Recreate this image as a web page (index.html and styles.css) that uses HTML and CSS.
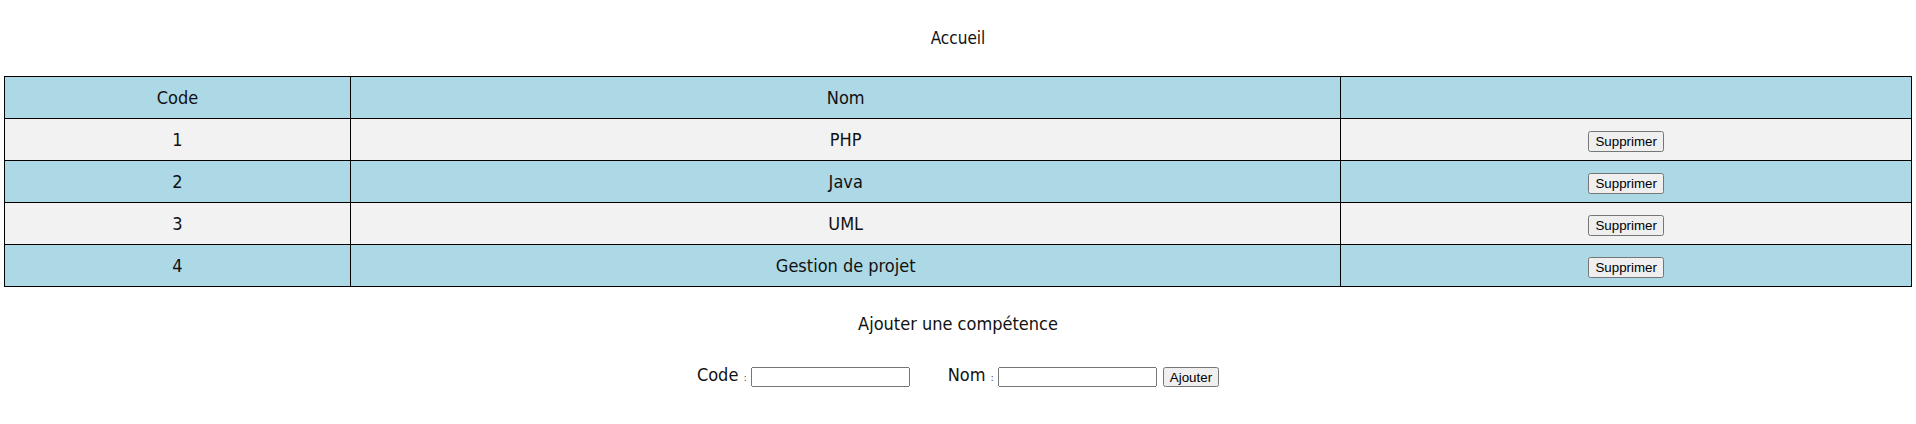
FILE: index.html
```html
<!DOCTYPE html>
<html lang="fr">
<head>
    <meta charset="UTF-8">
    <meta name="viewport" content="width=device-width, initial-scale=1.0">
    <title>Accueil</title>
    <link rel="stylesheet" href="styles.css">
</head>
<body>
    <h1 class="title">Accueil</h1>

    <table class="competences">
        <thead>
            <tr>
                <th class="col-code">Code</th>
                <th class="col-nom">Nom</th>
                <th class="col-action"></th>
            </tr>
        </thead>
        <tbody>
            <tr>
                <td>1</td>
                <td>PHP</td>
                <td><button type="button">Supprimer</button></td>
            </tr>
            <tr>
                <td>2</td>
                <td>Java</td>
                <td><button type="button">Supprimer</button></td>
            </tr>
            <tr>
                <td>3</td>
                <td>UML</td>
                <td><button type="button">Supprimer</button></td>
            </tr>
            <tr>
                <td>4</td>
                <td>Gestion de projet</td>
                <td><button type="button">Supprimer</button></td>
            </tr>
        </tbody>
    </table>

    <h2 class="subtitle">Ajouter une compétence</h2>

    <form class="add-form">
        <label for="code"><span class="name">Code</span><span class="sep">:</span></label>
        <input type="text" id="code" name="code">
        <label for="nom" class="label-nom"><span class="name">Nom</span><span class="sep">:</span></label>
        <input type="text" id="nom" name="nom">
        <button type="submit">Ajouter</button>
    </form>
</body>
</html>
```

FILE: styles.css
```css
body {
    margin: 0;
    font-family: 'Liberation Sans Narrow', 'DejaVu Sans Condensed', sans-serif;
    color: #111;
    background-color: #fff;
}
.title {
    font-size: 17px;
    font-weight: normal;
    line-height: 26px;
    text-align: center;
    margin: 25px 0 25px;
}
.competences {
    width: calc(100% - 8px);
    margin: 0 auto;
    border-collapse: collapse;
    table-layout: fixed;
}
.competences th,
.competences td {
    border: 1px solid #000;
    padding: 8px;
    line-height: 25px;
    font-size: 18px;
    font-weight: normal;
    text-align: center;
}
.competences thead tr,
.competences tbody tr:nth-child(even) {
    background-color: #add8e6;
}
.competences tbody tr:nth-child(odd) {
    background-color: #f2f2f2;
}
.col-code {
    width: 17.25%;
}
.col-nom {
    width: 51.05%;
}
button {
    font-family: 'Liberation Sans', Arial, sans-serif;
    font-size: 13.33px;
    padding: 1px 5px;
}
.subtitle {
    font-size: 18px;
    font-weight: normal;
    line-height: 26px;
    text-align: center;
    margin: 24px 0 0;
}
.add-form {
    display: flex;
    justify-content: center;
    align-items: center;
    margin-top: 25px;
}
.add-form label {
    display: inline-flex;
    align-items: baseline;
    font-size: 18px;
    line-height: 26px;
}
.add-form .sep {
    font-size: 11px;
    margin: 0 4px 0 5px;
    color: #555;
}
.add-form .label-nom {
    margin-left: 38px;
}
.add-form input {
    width: 159px;
    height: 20px;
    box-sizing: border-box;
    font-size: 13px;
}
.add-form button {
    margin-left: 6px;
    height: 20px;
}
```
